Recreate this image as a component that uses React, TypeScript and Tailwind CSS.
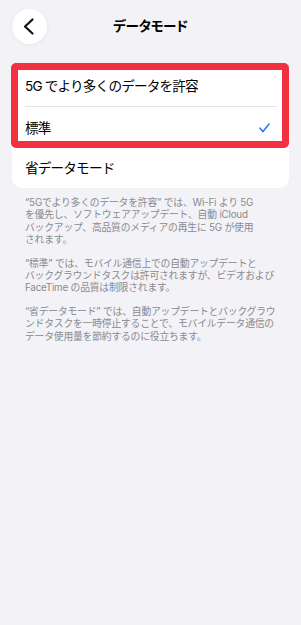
import React from "react";

const font = { fontFamily: "Inter, 'Noto Sans CJK JP', sans-serif" };

export default function App() {
  return (
    <div
      className="min-h-[625px] w-full bg-[#f2f2f7] font-['Inter','Noto_Sans_CJK_JP',sans-serif]"
      style={font}
    >
      <div className="grid grid-cols-[35px_1fr_35px] items-center px-[12px] pt-[9px]">
        <div className="flex h-[35px] w-[35px] items-center justify-center rounded-full bg-white shadow-[0_1px_4px_rgba(0,0,0,0.06)]">
          <svg width="35" height="35" viewBox="0 0 35 35" fill="none">
            <path
              d="M20.5 10.5 L13 17.5 L20.5 24.5"
              stroke="#111"
              strokeWidth="2.2"
              strokeLinecap="round"
              strokeLinejoin="round"
            />
          </svg>
        </div>
        <div className="text-center text-[13.6px] font-semibold text-black tracking-[-0.02em] [font-feature-settings:'palt']">
          データモード
        </div>
        <div />
      </div>

      <div className="relative mx-[12px] mt-[19px] rounded-[10px] bg-white">
        <div className="flex h-[43px] items-center pl-[13px] pt-[4px] text-[13.6px] text-black tracking-[-0.06em] whitespace-nowrap">
          5G でより多くのデータを許容
        </div>
        <div className="ml-[13px] mr-[12px] h-px bg-[#e4e4e8]" />
        <div className="flex h-[42px] items-center justify-between pl-[13px] pr-[19px] text-[13.6px] text-black tracking-[-0.06em]">
          <span>標準</span>
          <svg width="11" height="10" viewBox="0 0 11 10" fill="none">
            <path
              d="M1 5.2 L4 8.6 L10 1"
              stroke="#3478f6"
              strokeWidth="1.6"
              strokeLinecap="round"
              strokeLinejoin="round"
            />
          </svg>
        </div>
        <div className="flex h-[39px] items-center pl-[13px] text-[13.6px] text-black tracking-[-0.06em]">
          省データモード
        </div>
        <div className="pointer-events-none absolute left-[-1px] right-0 top-0 h-[85px] rounded-[5px] border-[7px] border-[#f2303f]" />
      </div>

      <div className="mt-[9px] flex flex-col gap-[11px] pl-[25px] text-[9.8px] leading-[12.4px] text-[#8a8a8e] tracking-[-0.02em] whitespace-nowrap">
        <p>
          “5Gでより多くのデータを許容” では、Wi-Fi より 5G
          <br />
          を優先し、ソフトウェアアップデート、自動 iCloud
          <br />
          バックアップ、高品質のメディアの再生に 5G が使用
          <br />
          されます。
        </p>
        <p>
          “標準” では、モバイル通信上での自動アップデートと
          <br />
          バックグラウンドタスクは許可されますが、ビデオおよび
          <br />
          FaceTime の品質は制限されます。
        </p>
        <p>
          “省データモード” では、自動アップデートとバックグラウ
          <br />
          ンドタスクを一時停止することで、モバイルデータ通信の
          <br />
          データ使用量を節約するのに役立ちます。
        </p>
      </div>
    </div>
  );
}
